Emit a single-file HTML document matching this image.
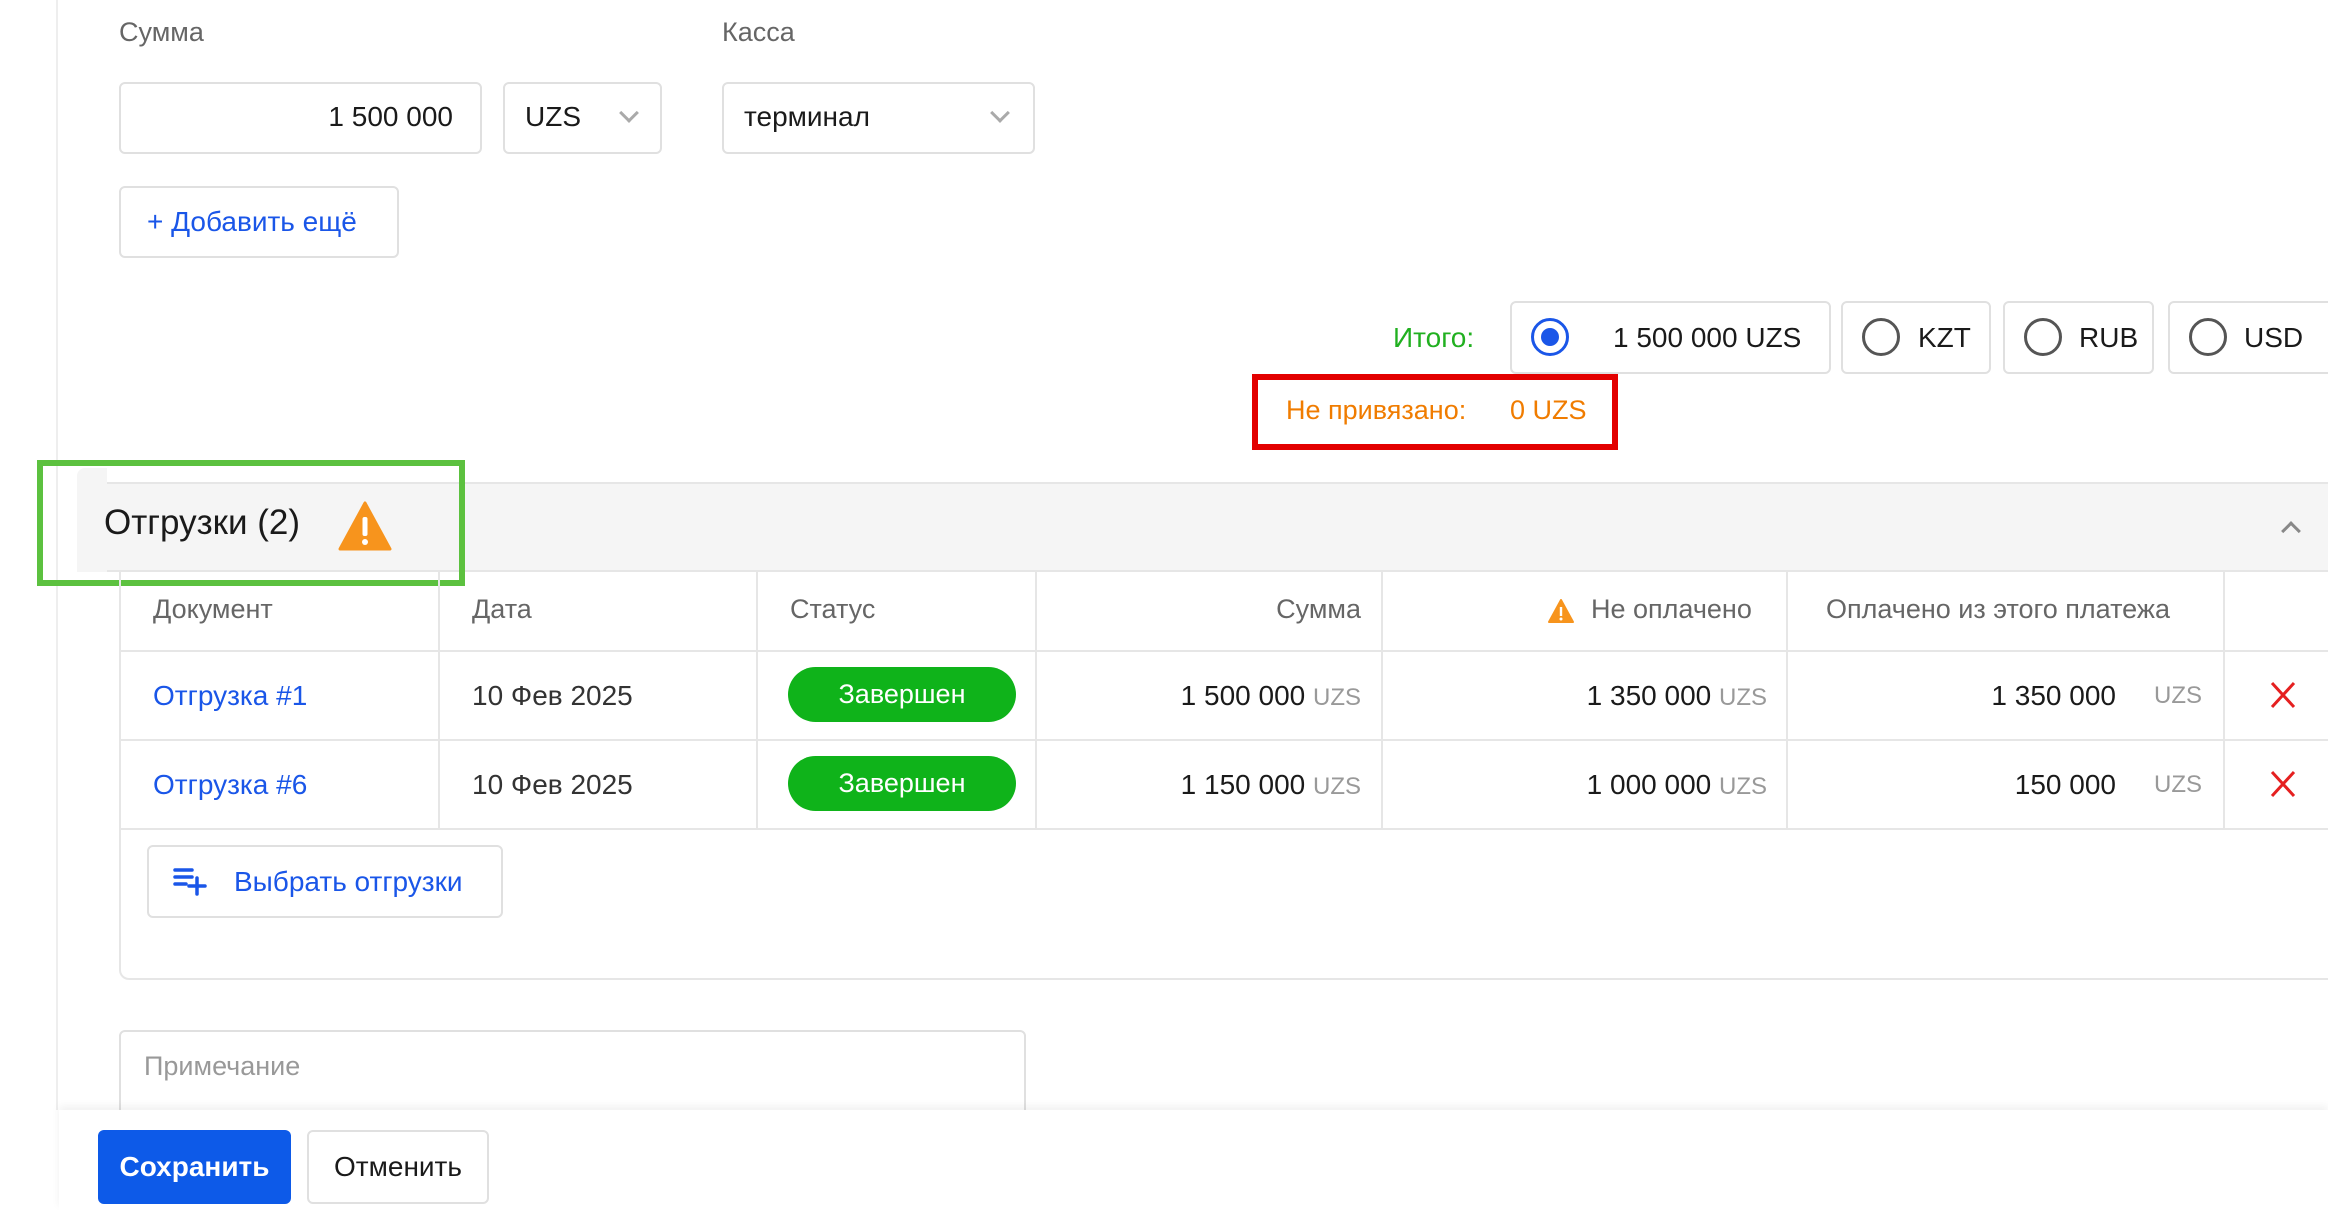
<!DOCTYPE html>
<html><head><meta charset="utf-8"><style>
*{box-sizing:border-box;margin:0;padding:0}
body{width:2328px;height:1210px;overflow:hidden;background:#fff;font-family:"Liberation Sans","Noto Sans CJK SC",sans-serif;position:relative;color:#1a1a1a}
.a{position:absolute}
.lbl{font-size:27px;color:#666}
.box{border:2px solid #e0e0e0;border-radius:6px;background:#fff}
.t{font-size:28px}
.chev{position:absolute;width:14px;height:14px;border-right:3px solid #aaa;border-bottom:3px solid #aaa;transform:rotate(45deg)}
.radio{position:absolute;width:38px;height:38px;border:3px solid #555;border-radius:50%}
.vl{position:absolute;top:572px;height:256px;width:2px;background:#e6e6e6}
.hl{position:absolute;left:119px;right:0;height:2px;background:#e6e6e6}
.badge{position:absolute;left:788px;width:228px;height:55px;border-radius:28px;background:#0fb31a;color:#fff;font-size:27px;text-align:center;line-height:55px}
.gray{color:#999;font-size:24px}
.x{position:absolute;left:2270px}
</style></head><body>
<div class="a" style="left:56px;top:0;width:2px;height:1110px;background:#eee"></div>

<div class="a lbl" style="left:119px;top:17px">Сумма</div>
<div class="a lbl" style="left:722px;top:17px">Касса</div>
<div class="a box" style="left:119px;top:82px;width:363px;height:72px"></div>
<div class="a t" style="left:119px;top:101px;width:334px;text-align:right">1 500 000</div>
<div class="a box" style="left:503px;top:82px;width:159px;height:72px"></div>
<div class="a t" style="left:525px;top:101px">UZS</div>
<div class="chev" style="left:622px;top:106px"></div>
<div class="a box" style="left:722px;top:82px;width:313px;height:72px"></div>
<div class="a t" style="left:744px;top:101px">терминал</div>
<div class="chev" style="left:993px;top:106px"></div>

<div class="a box" style="left:119px;top:186px;width:280px;height:72px"></div>
<div class="a t" style="left:147px;top:206px;color:#1a56e8">+ Добавить ещё</div>

<div class="a t" style="left:1393px;top:322px;color:#21b020">Итого:</div>
<div class="a box" style="left:1510px;top:301px;width:321px;height:73px"></div>
<div class="radio" style="left:1531px;top:318px;border-color:#1a56e8"><div class="a" style="left:7px;top:7px;width:18px;height:18px;border-radius:50%;background:#1a56e8"></div></div>
<div class="a t" style="left:1613px;top:322px">1 500 000 UZS</div>
<div class="a box" style="left:1841px;top:301px;width:150px;height:73px"></div>
<div class="radio" style="left:1862px;top:318px"></div>
<div class="a t" style="left:1918px;top:322px">KZT</div>
<div class="a box" style="left:2003px;top:301px;width:151px;height:73px"></div>
<div class="radio" style="left:2024px;top:318px"></div>
<div class="a t" style="left:2079px;top:322px">RUB</div>
<div class="a box" style="left:2168px;top:301px;width:170px;height:73px"></div>
<div class="radio" style="left:2189px;top:318px"></div>
<div class="a t" style="left:2244px;top:322px">USD</div>

<div class="a" style="left:1252px;top:374px;width:366px;height:76px;border:6px solid #e30000"></div>
<div class="a" style="left:1286px;top:395px;font-size:27px;color:#f07c00">Не привязано:</div>
<div class="a" style="left:1510px;top:395px;font-size:27px;color:#f07c00">0 UZS</div>

<div class="a" style="left:77px;top:482px;right:0;height:90px;background:#f5f5f5;border-top:2px solid #e6e6e6;border-bottom:2px solid #e6e6e6"></div>
<div class="a" style="left:77px;top:468px;width:30px;height:104px;background:#f5f5f5;border-radius:8px 0 0 0"></div>
<div class="a" style="left:37px;top:460px;width:428px;height:126px;border:6px solid #5cc13f"></div>
<div class="a" style="left:104px;top:503px;font-size:35px">Отгрузки (2)</div>
<svg class="a" style="left:338px;top:500px" width="54" height="52" viewBox="0 0 54 52"><path d="M27 3 L52 49 H2 Z" fill="#f7941d" stroke="#f7941d" stroke-width="3" stroke-linejoin="round"/><rect x="24.5" y="17" width="5" height="19" rx="2" fill="#fff"/><circle cx="27" cy="42" r="3" fill="#fff"/></svg>
<div class="chev" style="left:2284px;top:524px;transform:rotate(-135deg);border-color:#888"></div>

<div class="a" style="left:119px;top:572px;right:-20px;height:408px;border:2px solid #e6e6e6;border-top:none;border-radius:0 0 0 10px"></div>
<div class="hl" style="top:650px"></div>
<div class="hl" style="top:739px"></div>
<div class="hl" style="top:828px"></div>
<div class="vl" style="left:438px"></div>
<div class="vl" style="left:756px"></div>
<div class="vl" style="left:1035px"></div>
<div class="vl" style="left:1381px"></div>
<div class="vl" style="left:1786px"></div>
<div class="vl" style="left:2223px"></div>

<div class="a lbl" style="left:153px;top:594px">Документ</div>
<div class="a lbl" style="left:472px;top:594px">Дата</div>
<div class="a lbl" style="left:790px;top:594px">Статус</div>
<div class="a lbl" style="left:1035px;top:594px;width:326px;text-align:right">Сумма</div>
<svg class="a" style="left:1547px;top:598px" width="28" height="26" viewBox="0 0 28 26"><path d="M14 2 L26 24 H2 Z" fill="#f7941d" stroke="#f7941d" stroke-width="2" stroke-linejoin="round"/><rect x="12.8" y="9" width="2.4" height="9" fill="#fff"/><circle cx="14" cy="21" r="1.5" fill="#fff"/></svg>
<div class="a lbl" style="left:1591px;top:594px">Не оплачено</div>
<div class="a lbl" style="left:1826px;top:594px">Оплачено из этого платежа</div>

<div class="a t" style="left:153px;top:680px;color:#1a56e8">Отгрузка #1</div>
<div class="a t" style="left:472px;top:680px;color:#333">10 Фев 2025</div>
<div class="badge" style="top:667px">Завершен</div>
<div class="a t" style="left:1035px;top:680px;width:326px;text-align:right">1 500 000 <span class="gray">UZS</span></div>
<div class="a t" style="left:1381px;top:680px;width:386px;text-align:right">1 350 000 <span class="gray">UZS</span></div>
<div class="a t" style="left:1786px;top:680px;width:330px;text-align:right">1 350 000</div>
<div class="a gray" style="left:2154px;top:682px">UZS</div>
<svg class="x" style="top:681px" width="26" height="28" viewBox="0 0 26 28"><path d="M2 2L24 26M24 2L2 26" stroke="#e52020" stroke-width="3"/></svg>

<div class="a t" style="left:153px;top:769px;color:#1a56e8">Отгрузка #6</div>
<div class="a t" style="left:472px;top:769px;color:#333">10 Фев 2025</div>
<div class="badge" style="top:756px">Завершен</div>
<div class="a t" style="left:1035px;top:769px;width:326px;text-align:right">1 150 000 <span class="gray">UZS</span></div>
<div class="a t" style="left:1381px;top:769px;width:386px;text-align:right">1 000 000 <span class="gray">UZS</span></div>
<div class="a t" style="left:1786px;top:769px;width:330px;text-align:right">150 000</div>
<div class="a gray" style="left:2154px;top:771px">UZS</div>
<svg class="x" style="top:770px" width="26" height="28" viewBox="0 0 26 28"><path d="M2 2L24 26M24 2L2 26" stroke="#e52020" stroke-width="3"/></svg>

<div class="a box" style="left:147px;top:845px;width:356px;height:73px"></div>
<svg class="a" style="left:172px;top:866px" width="36" height="30" viewBox="0 0 36 30"><g stroke="#1a56e8" stroke-width="3.5" stroke-linecap="round"><path d="M3 4H20M3 11H20M3 18H14M25 12V28M17 20H33"/></g></svg>
<div class="a t" style="left:234px;top:866px;color:#1a56e8">Выбрать отгрузки</div>

<div class="a box" style="left:119px;top:1030px;width:907px;height:120px"></div>
<div class="a lbl" style="left:144px;top:1051px;color:#999">Примечание</div>

<div class="a" style="left:59px;top:1110px;right:0;height:100px;background:#fff;box-shadow:0 -4px 8px rgba(0,0,0,0.06)"></div>
<div class="a" style="left:98px;top:1130px;width:193px;height:74px;background:#0d5ae8;border-radius:6px;color:#fff;font-size:28px;text-align:center;line-height:74px;font-weight:bold">Сохранить</div>
<div class="a box" style="left:307px;top:1130px;width:182px;height:74px;text-align:center;line-height:70px;font-size:28px">Отменить</div>
</body></html>
